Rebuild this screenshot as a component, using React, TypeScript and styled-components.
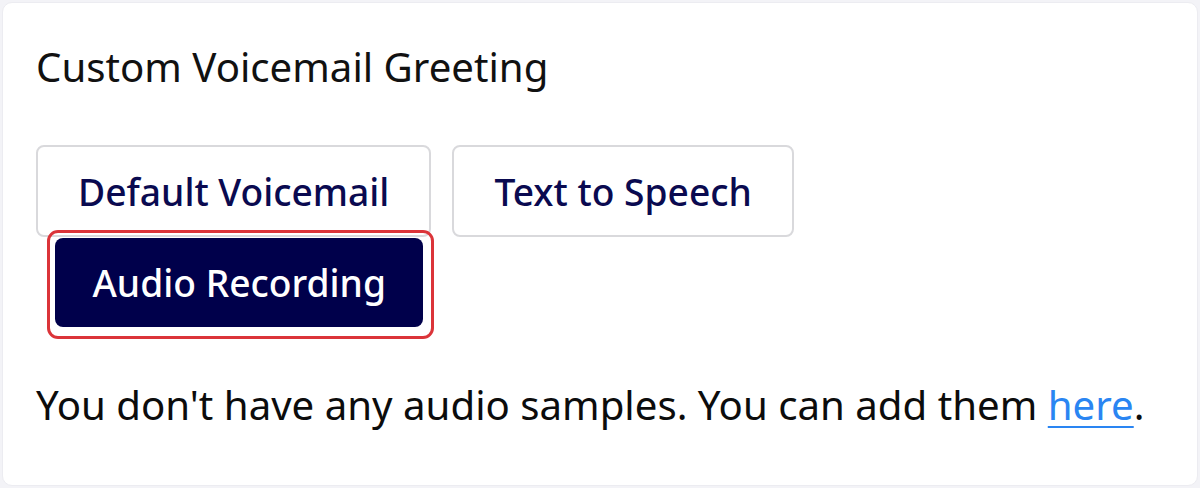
import styled, { createGlobalStyle } from 'styled-components'

const GlobalStyle = createGlobalStyle`
  html, body {
    margin: 0;
    padding: 0;
    background: #f3f3f7;
  }
  body {
    font-family: 'Noto Sans', 'Open Sans', sans-serif;
  }
  #root {
    padding: 2px;
  }
`

const Card = styled.section`
  box-sizing: border-box;
  width: 1196px;
  height: 484px;
  background: #ffffff;
  border: 1px solid #ececf1;
  border-radius: 10px;
  padding: 36px 33px 0 33px;
`

const Title = styled.h2`
  margin: 0;
  font-size: 40.2px;
  font-weight: 400;
  color: #111111;
`

const OptionRow = styled.div`
  display: flex;
  flex-wrap: wrap;
  column-gap: 21px;
  row-gap: 1px;
  margin-top: 51px;
  width: 800px;
`

const OptionButton = styled.button<{ selected?: boolean }>`
  box-sizing: border-box;
  height: ${({ selected }) => (selected ? 89 : 92)}px;
  padding: 0 ${({ selected }) => (selected ? 37.5 : 40)}px;
  border: ${({ selected }) => (selected ? 'none' : '2px solid #d9d9dc')};
  border-radius: 8px;
  background: ${({ selected }) => (selected ? '#00004b' : '#ffffff')};
  color: ${({ selected }) => (selected ? '#ffffff' : '#0a0a50')};
  font-family: inherit;
  font-size: 37.2px;
  font-weight: 500;
  cursor: pointer;
`

const Highlighted = styled.div`
  position: relative;
  margin-left: 19px;
`

// annotation ring drawn over the selected option
const Ring = styled.span`
  position: absolute;
  left: -8px;
  top: -8px;
  right: -11px;
  bottom: -12px;
  border: 3px solid #db3439;
  border-radius: 11px;
  pointer-events: none;
`

const Note = styled.p`
  margin: 50px 0 0 0;
  font-size: 40.2px;
  color: #0c0c0c;
`

const Link = styled.a`
  color: #2a85f2;
  text-decoration: underline;
  text-underline-offset: 6px;
  text-decoration-thickness: 2px;
`

export default function App() {
  return (
    <>
      <GlobalStyle />
      <Card>
        <Title>Custom Voicemail Greeting</Title>
        <OptionRow>
          <OptionButton>Default Voicemail</OptionButton>
          <OptionButton>Text to Speech</OptionButton>
          <Highlighted>
            <OptionButton selected>Audio Recording</OptionButton>
            <Ring />
          </Highlighted>
        </OptionRow>
        <Note>
          You don't have any audio samples. You can add them <Link href="#">here</Link>.
        </Note>
      </Card>
    </>
  )
}
